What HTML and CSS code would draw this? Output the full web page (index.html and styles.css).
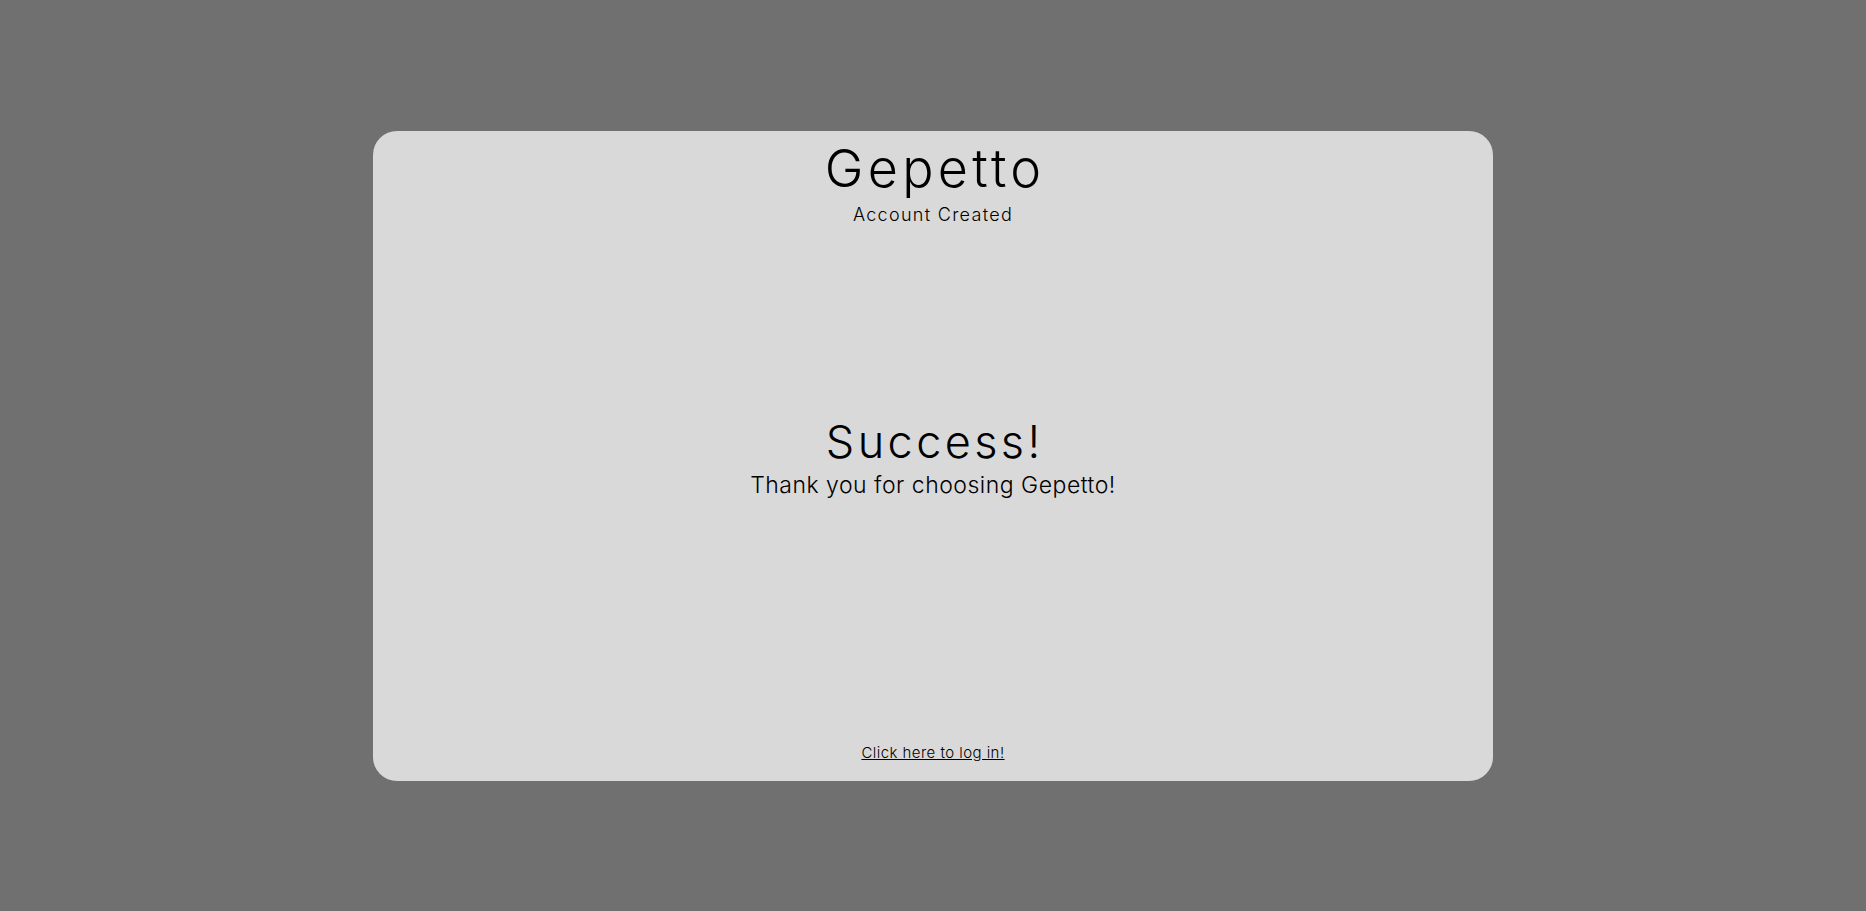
FILE: index.html
```html
<!DOCTYPE html>
<html lang="en">
<head>
<meta charset="utf-8">
<title>Gepetto - Account Created</title>
<link rel="stylesheet" href="styles.css">
</head>
<body>
<main class="card">
  <header class="card-header">
    <h1 class="brand">Gepetto</h1>
    <p class="subtitle">Account Created</p>
  </header>
  <section class="message">
    <h2 class="title">Success!</h2>
    <p class="thanks">Thank you for choosing Gepetto!</p>
  </section>
  <footer class="card-footer">
    <a class="login-link" href="#">Click here to log in!</a>
  </footer>
</main>
</body>
</html>
```
FILE: styles.css
```css
html, body {
  margin: 0;
  padding: 0;
  height: 100%;
}
body {
  background: #707070;
  font-family: "Inter", "DejaVu Sans", sans-serif;
  font-weight: 300;
  color: #000;
  display: flex;
  align-items: center;
  justify-content: center;
}
.card {
  width: 1120px;
  height: 650px;
  background: #d9d9d9;
  border-radius: 24px;
  display: flex;
  flex-direction: column;
  align-items: center;
  box-sizing: border-box;
  padding: 8px 0 19px;
}
.card-header {
  display: flex;
  flex-direction: column;
  align-items: center;
}
.brand {
  margin: 0;
  font-size: 52px;
  font-weight: 300;
  line-height: 60px;
  letter-spacing: 4.3px;
  padding-left: 4.3px;
}
.subtitle {
  margin: 0;
  font-size: 18px;
  line-height: 32px;
  letter-spacing: 1.3px;
}
.message {
  flex: 1;
  display: flex;
  flex-direction: column;
  align-items: center;
  justify-content: center;
  padding-bottom: 54px;
}
.title {
  margin: 0;
  font-size: 45px;
  font-weight: 300;
  line-height: 50px;
  letter-spacing: 3.4px;
  padding-left: 3.4px;
}
.thanks {
  margin: 0;
  font-size: 23px;
  line-height: 36px;
  letter-spacing: 0.5px;
}
.card-footer {
  line-height: 18px;
}
.login-link {
  color: #000;
  font-size: 15px;
  letter-spacing: 0.45px;
  text-decoration: underline;
}
```
